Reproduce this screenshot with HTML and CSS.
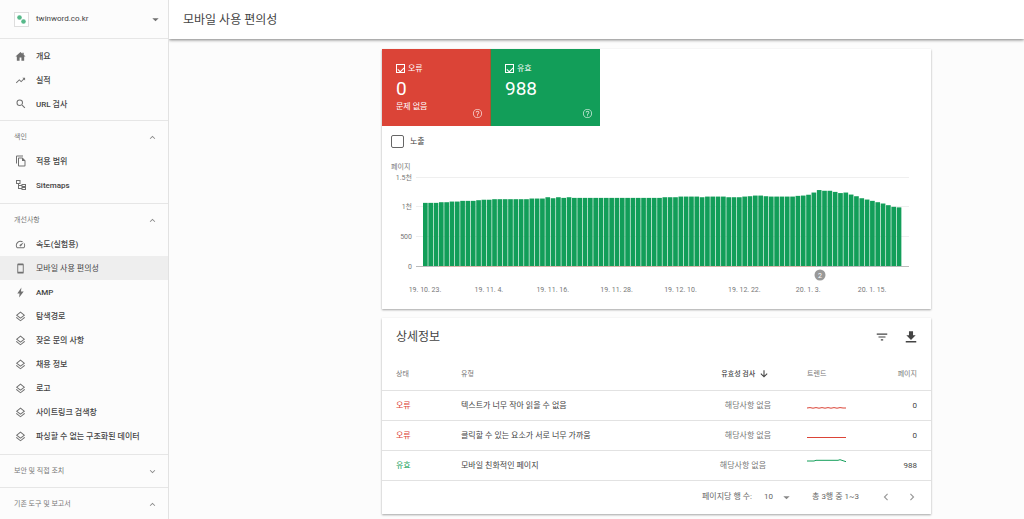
FILE: index.html
```html
<!DOCTYPE html>
<html lang="ko">
<head>
<meta charset="utf-8">
<title>모바일 사용 편의성</title>
<link rel="stylesheet" href="styles.css">
</head>
<body>
<svg class="sprite" aria-hidden="true">
  <symbol id="home" viewBox="0 0 24 24"><path d="M10 21v-7h4v7h6v-9h3L19 8.400V4h-3v2L12 2 1 12h3v9z"/></symbol>
  <symbol id="trend" viewBox="0 0 24 24"><path d="M16 6l2.290 2.290-4.880 4.880-4-4L2 16.590 3.410 18l6-6 4 4 6.300-6.290L22 12V6z"/></symbol>
  <symbol id="search" viewBox="0 0 24 24"><path d="M15.500 14h-.79l-.28-.27A6.470 6.470 0 0 0 16 9.500 6.500 6.500 0 1 0 9.500 16c1.610 0 3.090-.59 4.230-1.570l.27.28v.79l5 4.990L20.490 19l-4.990-5zm-6 0a4.500 4.500 0 1 1 0-9 4.500 4.500 0 0 1 0 9z"/></symbol>
  <symbol id="copy" viewBox="0 0 24 24"><path d="M16 1H4a2 2 0 0 0-2 2v14h2V3h12V1zm-1 4H8a2 2 0 0 0-2 2v14a2 2 0 0 0 2 2h11a2 2 0 0 0 2-2V11l-6-6zM8 21V7h6v5h5v9H8z"/></symbol>
  <symbol id="tree" viewBox="0 0 24 24" fill-rule="evenodd"><path d="M2 2h9v8H8v2h5v-2h9v6h-9v-2H8v4h5v-2h9v6h-9v-2H6V10H2V2zm2 2v4h5V4H4zm11 8v2h5v-2h-5zm0 6v2h5v-2h-5z"/></symbol>
  <symbol id="speed" viewBox="0 0 24 24"><path d="M20.380 8.570l-1.230 1.850a8 8 0 0 1-.22 7.580H5.070A8 8 0 0 1 15.580 6.850l1.850-1.230A10 10 0 0 0 3.350 19a2 2 0 0 0 1.720 1h13.850a2 2 0 0 0 1.740-1 10 10 0 0 0-.27-10.440zm-9.790 6.840a2 2 0 0 0 2.830 0l5.660-8.490-8.490 5.660a2 2 0 0 0 0 2.830z"/></symbol>
  <symbol id="phone" viewBox="0 0 24 24"><path d="M17 1H7a2 2 0 0 0-2 2v18c0 1.100.9 2 2 2h10a2 2 0 0 0 2-2V3a2 2 0 0 0-2-2zm0 18H7V5h10v14z"/></symbol>
  <symbol id="bolt" viewBox="0 0 24 24"><path d="M14 1L5 14h5l-1 9 10-13h-6z"/></symbol>
  <symbol id="layers" viewBox="0 0 24 24"><path d="M12 1L2 9l10 8 10-8L12 1zm0 2.800L18.600 9 12 14.300 5.400 9 12 3.800zM3.700 13.200L2 14.600l10 8 10-8-1.700-1.400L12 20z"/></symbol>
  <symbol id="up" viewBox="0 0 24 24"><path d="M12 8l-6 6 1.410 1.410L12 10.830l4.590 4.580L18 14z"/></symbol>
  <symbol id="down" viewBox="0 0 24 24"><path d="M16.590 8.590L12 13.170 7.410 8.590 6 10l6 6 6-6z"/></symbol>
  <symbol id="caret" viewBox="0 0 24 24"><path d="M5 9l7 7 7-7z"/></symbol>
  <symbol id="help" viewBox="0 0 24 24"><path d="M11 18h2v-2h-2v2zm1-16a10 10 0 1 0 0 20 10 10 0 0 0 0-20zm0 18a8 8 0 1 1 0-16 8 8 0 0 1 0 16zm0-14a4 4 0 0 0-4 4h2a2 2 0 1 1 4 0c0 2-3 1.750-3 5h2c0-2.250 3-2.500 3-5a4 4 0 0 0-4-4z"/></symbol>
  <symbol id="filter" viewBox="0 0 24 24"><path d="M10 18h4v-2h-4v2zM3 6v2h18V6H3zm3 7h12v-2H6v2z"/></symbol>
  <symbol id="download" viewBox="0 0 24 24"><path d="M20 9h-4.500V2h-7v7H4l8 8zM3 19v2.500h18V19z"/></symbol>
  <symbol id="arrow" viewBox="0 0 24 24"><path d="M20.500 12l-1.800-1.800-5.400 5.400V3h-2.600v12.600l-5.400-5.400L3.500 12l8.500 8.500z"/></symbol>
  <symbol id="prev" viewBox="0 0 24 24"><path d="M15.410 7.410L14 6l-6 6 6 6 1.410-1.410L10.830 12z"/></symbol>
  <symbol id="next" viewBox="0 0 24 24"><path d="M10 6L8.590 7.410 13.170 12l-4.580 4.590L10 18l6-6z"/></symbol>
</svg>

<div class="app">
  <aside class="sidebar">
    <button class="property" type="button">
      <svg class="favicon" viewBox="0 0 15 15"><rect x=".5" y=".5" width="14" height="14" fill="#fff" stroke="#dedede"/><circle cx="5.500" cy="5.500" r="2.300" fill="#57b98a"/><circle cx="9.500" cy="9.500" r="2.300" fill="#57b98a"/></svg>
      <span class="property-name">twinword.co.kr</span>
      <svg class="icon"><use href="#caret"/></svg>
    </button>
    <nav>
      <ul class="menu menu-top">
        <li><a href="#"><svg class="icon"><use href="#home"/></svg>개요</a></li>
        <li><a href="#"><svg class="icon"><use href="#trend"/></svg>실적</a></li>
        <li><a href="#"><svg class="icon icon-large"><use href="#search"/></svg>URL 검사</a></li>
      </ul>
      <section class="group">
        <button class="group-head" type="button">색인<svg class="icon"><use href="#up"/></svg></button>
        <ul class="menu">
          <li><a href="#"><svg class="icon icon-large"><use href="#copy"/></svg>적용 범위</a></li>
          <li><a href="#"><svg class="icon icon-large"><use href="#tree"/></svg>Sitemaps</a></li>
        </ul>
      </section>
      <section class="group">
        <button class="group-head" type="button">개선사항<svg class="icon"><use href="#up"/></svg></button>
        <ul class="menu">
          <li><a href="#"><svg class="icon"><use href="#speed"/></svg>속도(실험용)</a></li>
          <li><a class="current" href="#"><svg class="icon"><use href="#phone"/></svg>모바일 사용 편의성</a></li>
          <li><a href="#"><svg class="icon"><use href="#bolt"/></svg>AMP</a></li>
          <li><a href="#"><svg class="icon"><use href="#layers"/></svg>탐색경로</a></li>
          <li><a href="#"><svg class="icon"><use href="#layers"/></svg>잦은 문의 사항</a></li>
          <li><a href="#"><svg class="icon"><use href="#layers"/></svg>채용 정보</a></li>
          <li><a href="#"><svg class="icon"><use href="#layers"/></svg>로고</a></li>
          <li><a href="#"><svg class="icon"><use href="#layers"/></svg>사이트링크 검색창</a></li>
          <li><a href="#"><svg class="icon"><use href="#layers"/></svg>파싱할 수 없는 구조화된 데이터</a></li>
        </ul>
      </section>
      <section class="group collapsed">
        <button class="group-head" type="button">보안 및 직접 조치<svg class="icon"><use href="#down"/></svg></button>
      </section>
      <section class="group collapsed">
        <button class="group-head" type="button">기존 도구 및 보고서<svg class="icon"><use href="#up"/></svg></button>
      </section>
    </nav>
  </aside>

  <main class="main">
    <header class="topbar"><h1>모바일 사용 편의성</h1></header>
    <div class="content">
      <section class="card">
        <div class="tiles">
          <div class="tile tile-error">
            <label><input class="tile-check" type="checkbox" checked>오류</label>
            <strong>0</strong>
            <span>문제 없음</span>
            <svg class="icon tile-help"><use href="#help"/></svg>
          </div>
          <div class="tile tile-valid">
            <label><input class="tile-check" type="checkbox" checked>유효</label>
            <strong>988</strong>
            <svg class="icon tile-help"><use href="#help"/></svg>
          </div>
        </div>
        <label class="impressions"><input type="checkbox">노출</label>
        <svg class="chart" id="chart" viewBox="0 0 549 152" role="img" aria-label="페이지">
          <g class="grid"><path d="M34 20.500H527M34 49.500H527M34 79.500H527"/><path class="axis" d="M34 109.500H527"/></g>
          <g id="bars"></g>
          <path class="error-line" d="M57 109.500H433"/>
          <text x="9" y="12">페이지</text>
          <g class="y-labels"><text x="30" y="23">1.5천</text><text x="30" y="52">1천</text><text x="30" y="82">500</text><text x="30" y="112">0</text></g>
          <g class="x-labels" id="dates"></g>
          <circle cx="438" cy="118" r="5.500" fill="#999"/>
          <text class="marker" x="438" y="121">2</text>
        </svg>
      </section>

      <section class="card">
        <header class="card-head">
          <h2>상세정보</h2>
          <button type="button" aria-label="필터"><svg class="icon icon-action"><use href="#filter"/></svg></button>
          <button type="button" aria-label="다운로드"><svg class="icon icon-action"><use href="#download"/></svg></button>
        </header>
        <table>
          <thead>
            <tr><th class="status">상태</th><th>유형</th><th class="check sorted">유효성 검사 <svg class="icon"><use href="#arrow"/></svg></th><th class="trend">트렌드</th><th class="pages">페이지</th></tr>
          </thead>
          <tbody>
            <tr><td class="status error">오류</td><td>텍스트가 너무 작아 읽을 수 없음</td><td class="check">해당사항 없음</td><td class="trend"><svg class="spark error" viewBox="0 0 39 12"><path d="M0 9l3-.4 3 .6 3-.6 3 .6 3-.6 3 .6 3-.6 3 .6 3-.6 3 .6 3-.6 3 .4h3"/></svg></td><td class="pages">0</td></tr>
            <tr><td class="status error">오류</td><td>클릭할 수 있는 요소가 서로 너무 가까움</td><td class="check">해당사항 없음</td><td class="trend"><svg class="spark error" viewBox="0 0 39 12"><path d="M0 8.500H39"/></svg></td><td class="pages">0</td></tr>
            <tr><td class="status valid">유효</td><td>모바일 친화적인 페이지</td><td class="check settled">해당사항 없음</td><td class="trend"><svg class="spark valid" viewBox="0 0 39 12"><path d="M0 2h7l2-.7h22l2-.6 6 2"/></svg></td><td class="pages">988</td></tr>
          </tbody>
        </table>
        <footer class="pager">
          <label for="rows">페이지당 행 수:</label>
          <span class="select"><select id="rows"><option>10</option><option>25</option></select><svg class="icon"><use href="#caret"/></svg></span>
          <span class="range">총 3행 중 1~3</span>
          <button type="button" aria-label="이전"><svg class="icon icon-action"><use href="#prev"/></svg></button>
          <button type="button" aria-label="다음"><svg class="icon icon-action"><use href="#next"/></svg></button>
        </footer>
      </section>
    </div>
  </main>
</div>
<script src="chart.js"></script>
</body>
</html>
```

FILE: styles.css
```css
* { box-sizing: border-box; }

body {
  margin: 0;
  height: 100vh;
  overflow: hidden;
  background: #fcfcfc;
  color: #444;
  font: 8px/16px Roboto, "Noto Sans CJK KR", sans-serif;
}

button, select { font: inherit; color: inherit; background: none; border: 0; padding: 0; margin: 0; }
h1, h2, ul { margin: 0; padding: 0; font-weight: 500; }
ul { list-style: none; }
a { color: inherit; text-decoration: none; }
input { appearance: none; margin: 0; }

.sprite { display: none; }
.icon { width: 11px; height: 11px; flex: none; fill: currentColor; color: #707070; }
.icon-large { width: 12px; height: 12px; margin-right: -1px; }
.icon-action { width: 14px; height: 14px; display: block; }

.app { display: flex; height: 100%; }

.sidebar { position: relative; z-index: 1; width: 169px; flex: none; background: #fcfcfc; border-right: 1px solid #e2e2e2; overflow: hidden; }
.property { display: flex; align-items: center; width: 100%; height: 38px; padding: 0 7px 0 14px; gap: 7px; text-align: left; }
.favicon { width: 15px; height: 15px; }
.property-name { flex: 1; }
.menu-top { border-top: 1px solid #e6e6e6; padding: 5px 0 4px; }
.menu a { display: flex; align-items: center; gap: 10px; height: 24px; padding: 2px 0 0 15px; font-weight: 500; white-space: nowrap; }
.menu .icon { margin-bottom: 2px; }
.menu .current { background: #eee; font-weight: 400; }
.group { border-top: 1px solid #e6e6e6; padding-bottom: 6px; }
.group-head { display: flex; align-items: center; justify-content: space-between; width: 100%; padding: 8px 10px 4px 14px; font-size: 7px; line-height: 16px; color: #777; }
.group-head .icon { color: #888; }
.collapsed { padding-bottom: 4px; }

.main { flex: 1; min-width: 0; }
.topbar { position: relative; height: 39px; padding: 0 14px; display: flex; align-items: center; background: #fff; box-shadow: 0 1px 3px rgba(0, 0, 0, .5); }
h1, h2 { font-size: 12px; line-height: 18px; font-weight: 400; }

.content { display: grid; grid-template-columns: 213fr 549fr 93fr; row-gap: 9px; padding: 10px 0 5px; }
.card { grid-column: 2; min-width: 0; background: #fff; box-shadow: 0 1px 2px rgba(0, 0, 0, .35); }

.tiles { display: flex; }
.tile { position: relative; width: 109px; height: 77px; padding: 12px 14px; display: flex; flex-direction: column; color: #fff; }
.tile-error { background: #db4437; border-right: 1px solid #a6552f; }
.tile-valid { background: #129e59; }
.tile label { display: flex; align-items: center; gap: 3px; line-height: 15px; }
.tile-check { width: 9px; height: 9px; border: 1px solid #fff; display: grid; place-items: center; }
.tile-check::after { content: ""; width: 5px; height: 3px; border: solid #fff; border-width: 0 0 1px 1px; transform: rotate(-45deg); }
.tile strong { font-size: 19px; line-height: 26px; font-weight: 400; }
.tile span { line-height: 10px; }
.tile-help { position: absolute; right: 7px; bottom: 7px; color: rgba(255, 255, 255, .7); }

.impressions { display: flex; align-items: center; gap: 6px; height: 31px; padding-left: 9px; }
.impressions input { width: 13px; height: 13px; border: 1px solid #666; border-radius: 2px; }

.chart { display: block; width: 100%; height: auto; font-size: 7px; fill: #777; }
.grid path { stroke: #efefef; }
.grid .axis { stroke: #bbb; }
.chart .bar { fill: #129e59; }
.error-line { stroke: #d9b5ab; }
.y-labels { text-anchor: end; }
.x-labels, .marker { text-anchor: middle; }
.marker { fill: #fff; }

.card-head { display: flex; align-items: center; gap: 15px; height: 41px; padding: 0 13px 4px 14px; }
.card-head h2 { flex: 1; }
.card-head .icon { color: #444; }

table { width: 100%; table-layout: fixed; border-collapse: collapse; }
tr { border-bottom: 1px solid #e2e2e2; }
th, td { height: 30px; padding: 2px 0 0; text-align: left; white-space: nowrap; }
th { height: 31px; padding: 0; font-size: 7px; font-weight: 400; color: #777; }
.status { width: 79px; padding-left: 14px; }
.status.error { color: #db4437; }
.status.valid { color: #129e59; }
.check { width: 72px; text-align: right; color: #777; }
.check.sorted { padding-right: 2px; color: #444; font-weight: 500; }
.check.settled { padding-right: 5px; }
.sorted .icon { width: 10px; height: 10px; margin-left: 2px; vertical-align: middle; color: #444; }
.trend { width: 90px; padding: 0 0 0 36px; }
.pages { width: 70px; padding-right: 14px; text-align: right; }
.spark { display: block; width: 39px; height: 12px; fill: none; stroke-width: 1; }
.spark.error { stroke: #db4437; }
.spark.valid { stroke: #129e59; }

.pager { display: flex; align-items: center; justify-content: flex-end; height: 33px; padding-right: 12px; color: #666; }
.select { position: relative; display: flex; align-items: center; margin: 0 20px 0 12px; }
.select select { appearance: none; width: 28px; }
.select .icon { position: absolute; right: 0; pointer-events: none; color: #888; }
.range { margin-right: 20px; }
.pager button + button { margin-left: 12px; }
.pager button .icon { color: #999; }
```

FILE: chart.js
```js
const counts = [
  1064, 1064, 1064, 1075, 1075, 1086, 1086, 1098, 1098, 1098, 1109, 1117, 1117,
  1126, 1126, 1126, 1126, 1126, 1126, 1126, 1137, 1137, 1137, 1159, 1142, 1159,
  1148, 1159, 1148, 1148, 1148, 1148, 1148, 1148, 1148, 1148, 1148, 1148, 1148,
  1148, 1148, 1148, 1148, 1148, 1148, 1159, 1159, 1159, 1170, 1170, 1170, 1170,
  1159, 1170, 1170, 1170, 1170, 1159, 1159, 1159, 1170, 1176, 1187, 1187, 1176,
  1170, 1170, 1170, 1170, 1170, 1182, 1187, 1201, 1238, 1280, 1268, 1268, 1249,
  1229, 1238, 1204, 1176, 1142, 1120, 1098, 1075, 1053, 1025, 997, 988
];
const dates = ["19. 10. 23.", "19. 11. 4.", "19. 11. 16.", "19. 11. 28.", "19. 12. 10.", "19. 12. 22.", "20. 1. 3.", "20. 1. 15."];

const SVG = "http://www.w3.org/2000/svg";
const plot = { left: 41, right: 520, base: 109, height: 89, max: 1500 };
const pitch = (plot.right - plot.left) / counts.length;

function add(parent, name, attributes) {
  const node = document.createElementNS(SVG, name);
  for (const key in attributes) node.setAttribute(key, attributes[key]);
  parent.appendChild(node);
  return node;
}

counts.forEach((count, i) => {
  const height = count / plot.max * plot.height;
  add(document.getElementById("bars"), "rect", {
    class: "bar", x: plot.left + i * pitch, y: plot.base - height, width: pitch * 0.88, height
  });
});

dates.forEach((date, i) => {
  add(document.getElementById("dates"), "text", { x: plot.left + 2 + i * 12 * pitch, y: 135 }).textContent = date;
});
```
